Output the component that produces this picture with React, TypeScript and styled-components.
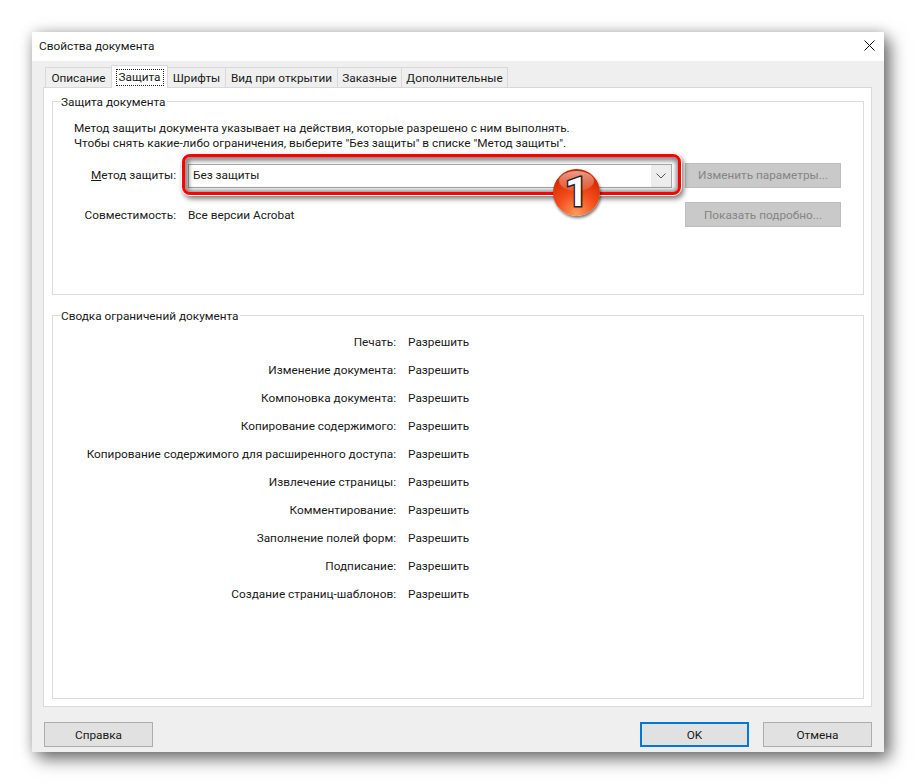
import React from "react";
import styled, { createGlobalStyle } from "styled-components";

const tabs = ["Описание", "Защита", "Шрифты", "Вид при открытии", "Заказные", "Дополнительные"];
const tabWidths = [67, 57, 59, 113, 65, 107];

const permissions = [
    "Печать:",
    "Изменение документа:",
    "Компоновка документа:",
    "Копирование содержимого:",
    "Копирование содержимого для расширенного доступа:",
    "Извлечение страницы:",
    "Комментирование:",
    "Заполнение полей форм:",
    "Подписание:",
    "Создание страниц-шаблонов:",
];

const App = () => (
    <Page>
        <GlobalStyle />
        <Dialog>
            <TitleBar>
                <Title>Свойства документа</Title>
                <CloseIcon width="11" height="11" viewBox="0 0 11 11">
                    <path d="M0.5 0.5 L10.5 10.5 M10.5 0.5 L0.5 10.5" stroke="#111" strokeWidth="1" fill="none" />
                </CloseIcon>
            </TitleBar>
            <Body>
                <TabStrip>
                    {tabs.map((tab, i) => (
                        <Tab key={tab} $width={tabWidths[i]} $active={i === 1}>
                            {i === 1 ? <FocusLabel>{tab}</FocusLabel> : tab}
                        </Tab>
                    ))}
                </TabStrip>
                <TabPanel>
                    <TopGroup>
                        <Legend>Защита документа</Legend>
                        <TopContent>
                            <Description>
                                Метод защиты документа указывает на действия, которые разрешено с ним выполнять.
                                <br />
                                Чтобы снять какие-либо ограничения, выберите "Без защиты" в списке "Метод защиты".
                            </Description>
                            <FormRow>
                                <FieldLabel><u>М</u>етод защиты:</FieldLabel>
                                <Combo>
                                    <ComboValue>Без защиты</ComboValue>
                                    <ComboArrow>
                                        <svg width="10" height="6" viewBox="0 0 10 6">
                                            <path d="M0.5 0.5 L5 5 L9.5 0.5" stroke="#555" strokeWidth="1" fill="none" />
                                        </svg>
                                    </ComboArrow>
                                    <Highlight />
                                    <Badge><BadgeDigit>1</BadgeDigit></Badge>
                                </Combo>
                                <DisabledButton>Изменить параметры...</DisabledButton>
                            </FormRow>
                            <CompatRow>
                                <CompatLabel>Совместимость:</CompatLabel>
                                <CompatValue>Все версии Acrobat</CompatValue>
                                <CompatButton>Показать подробно...</CompatButton>
                            </CompatRow>
                        </TopContent>
                    </TopGroup>
                    <BottomGroup>
                        <Legend>Сводка ограничений документа</Legend>
                        {permissions.map(name => (
                            <PermissionRow key={name}>
                                <PermissionName>{name}</PermissionName>
                                <span>Разрешить</span>
                            </PermissionRow>
                        ))}
                    </BottomGroup>
                </TabPanel>
                <Footer>
                    <PushButton>Справка</PushButton>
                    <FooterRight>
                        <PushButton $primary>OK</PushButton>
                        <PushButton>Отмена</PushButton>
                    </FooterRight>
                </Footer>
            </Body>
        </Dialog>
    </Page>
);

const GlobalStyle = createGlobalStyle`
  html, body {
    margin: 0;
    background: #fff;
  }
  * {
    box-sizing: border-box;
  }
`;

const Page = styled.div`
  width: 916px;
  height: 784px;
  padding: 32px;
  overflow: hidden;
  font-family: Roboto, "Noto Sans", sans-serif;
  font-size: 11.8px;
  line-height: 15px;
  color: #1a1a1a;
`;

const Dialog = styled.div`
  width: 852px;
  height: 720px;
  background: #efefef;
  box-shadow: 6px 7px 16px rgba(0, 0, 0, 0.55), 0 0 12px rgba(0, 0, 0, 0.18);
`;

const TitleBar = styled.div`
  height: 29px;
  padding: 0 8px 0 7px;
  background: #fff;
  display: flex;
  align-items: center;
  justify-content: space-between;
`;

const Title = styled.span``;

const CloseIcon = styled.svg`
  display: block;
  margin: -2px 1px 0 0;
`;

const Body = styled.div`
  padding: 5px 12px 0 11px;
`;

const TabStrip = styled.div`
  display: flex;
  height: 21px;
  padding-left: 3px;
  align-items: flex-end;
`;

const Tab = styled.div<{ $width: number; $active?: boolean }>`
  width: ${p => p.$width}px;
  height: ${p => (p.$active ? "23px" : "20px")};
  padding-top: ${p => (p.$active ? "0" : "1px")};
  display: flex;
  align-items: center;
  justify-content: center;
  position: relative;
  background: ${p => (p.$active ? "#fff" : "#efefef")};
  border: 1px solid #d9d9d9;
  border-bottom: none;
  margin-left: -1px;
  z-index: ${p => (p.$active ? 1 : 0)};
  margin-bottom: ${p => (p.$active ? "-1px" : "0")};
`;

const FocusLabel = styled.span`
  padding: 0 2px;
  border: 1px dotted #222;
  line-height: 15px;
`;

const TabPanel = styled.div`
  height: 620px;
  padding: 6px 7px 7px 8px;
  background: #fff;
  border: 1px solid #d9d9d9;
  display: flex;
  flex-direction: column;
  gap: 13px;
`;

const GroupBox = styled.fieldset`
  margin: 0;
  border: 1px solid #dcdcdc;
  min-width: 0;
`;

const TopGroup = styled(GroupBox)`
  height: 201px;
  padding: 12px 0 0;
`;

const TopContent = styled.div`
  padding-left: 21px;
`;

const BottomGroup = styled(GroupBox)`
  flex: 1;
  padding: 6px 0 0;
`;

const Legend = styled.legend`
  margin-left: 8px;
  padding: 1px 1px 0 0;
  height: 14px;
  line-height: 14px;
  background: #fff;
`;

const Description = styled.div`
  padding-top: 1px;
  margin-bottom: 12px;
`;

const FormRow = styled.div`
  display: flex;
  align-items: center;
  height: 25px;
`;

const CompatRow = styled(FormRow)`
  margin-top: 14px;
`;

const FieldLabel = styled.span`
  width: 102px;
  margin-right: 12px;
  text-align: right;
  flex: none;
  white-space: nowrap;
`;

const CompatLabel = styled(FieldLabel)`
  padding-top: 1px;
`;

const Combo = styled.div`
  position: relative;
  width: 484px;
  height: 24px;
  margin-right: 13px;
  background: #fff;
  border: 1px solid #a9a9a9;
  display: flex;
  align-items: center;
  justify-content: space-between;
  flex: none;
`;

const ComboValue = styled.span`
  padding-left: 4px;
`;

const ComboArrow = styled.div`
  width: 20px;
  height: 100%;
  background: #ededed;
  display: flex;
  align-items: center;
  justify-content: center;
`;

const Highlight = styled.div`
  position: absolute;
  left: -7px;
  top: -11px;
  width: 499px;
  height: 41px;
  border: 3px solid #f00;
  border-radius: 8px;
  box-shadow: 0 0 0 1px #fff, 2px 3px 5px 1px rgba(0, 0, 0, 0.5), inset 1px 1px 4px 3px rgba(0, 0, 0, 0.45);
`;

const Badge = styled.div`
  position: absolute;
  left: 364px;
  top: 4px;
  width: 47px;
  height: 47px;
  border-radius: 50%;
  background: radial-gradient(circle at 50% 95%, #ff9a5c 0%, #f4511e 38%, #d62a00 75%, #b52200 100%);
  box-shadow: 1px 2px 3px rgba(0, 0, 0, 0.55);
  display: flex;
  align-items: center;
  justify-content: center;
  overflow: hidden;

  &::before {
    content: "";
    position: absolute;
    left: 6px;
    top: 2px;
    width: 35px;
    height: 20px;
    border-radius: 50%;
    background: linear-gradient(rgba(255, 255, 255, 0.55), rgba(255, 255, 255, 0.1));
  }
`;

const BadgeDigit = styled.span`
  position: relative;
  font-family: Roboto, sans-serif;
  font-weight: 700;
  font-size: 40px;
  line-height: 47px;
  color: #fff;
  -webkit-text-stroke: 3px #222;
  paint-order: stroke fill;
`;

const CompatValue = styled.span`
  width: 497px;
  padding-top: 1px;
  flex: none;
`;

const DisabledButton = styled.div`
  width: 156px;
  height: 25px;
  flex: none;
  background: #c9c9c9;
  border: 1px solid #bdbdbd;
  color: #858585;
  display: flex;
  align-items: center;
  justify-content: center;
`;

const CompatButton = styled(DisabledButton)`
  padding-top: 1px;
`;

const PermissionRow = styled.div`
  height: 28px;
  display: flex;
  align-items: center;
  gap: 12px;
`;

const PermissionName = styled.span`
  width: 343px;
  text-align: right;
`;

const Footer = styled.div`
  margin-top: 15px;
  padding-left: 1px;
  display: flex;
  justify-content: space-between;
`;

const FooterRight = styled.div`
  display: flex;
  gap: 14px;
`;

const PushButton = styled.div<{ $primary?: boolean }>`
  width: 109px;
  height: 25px;
  padding-top: 1px;
  background: #e1e1e1;
  border: ${p => (p.$primary ? "2px solid #0078d7" : "1px solid #adadad")};
  display: flex;
  align-items: center;
  justify-content: center;
`;

export default App;
